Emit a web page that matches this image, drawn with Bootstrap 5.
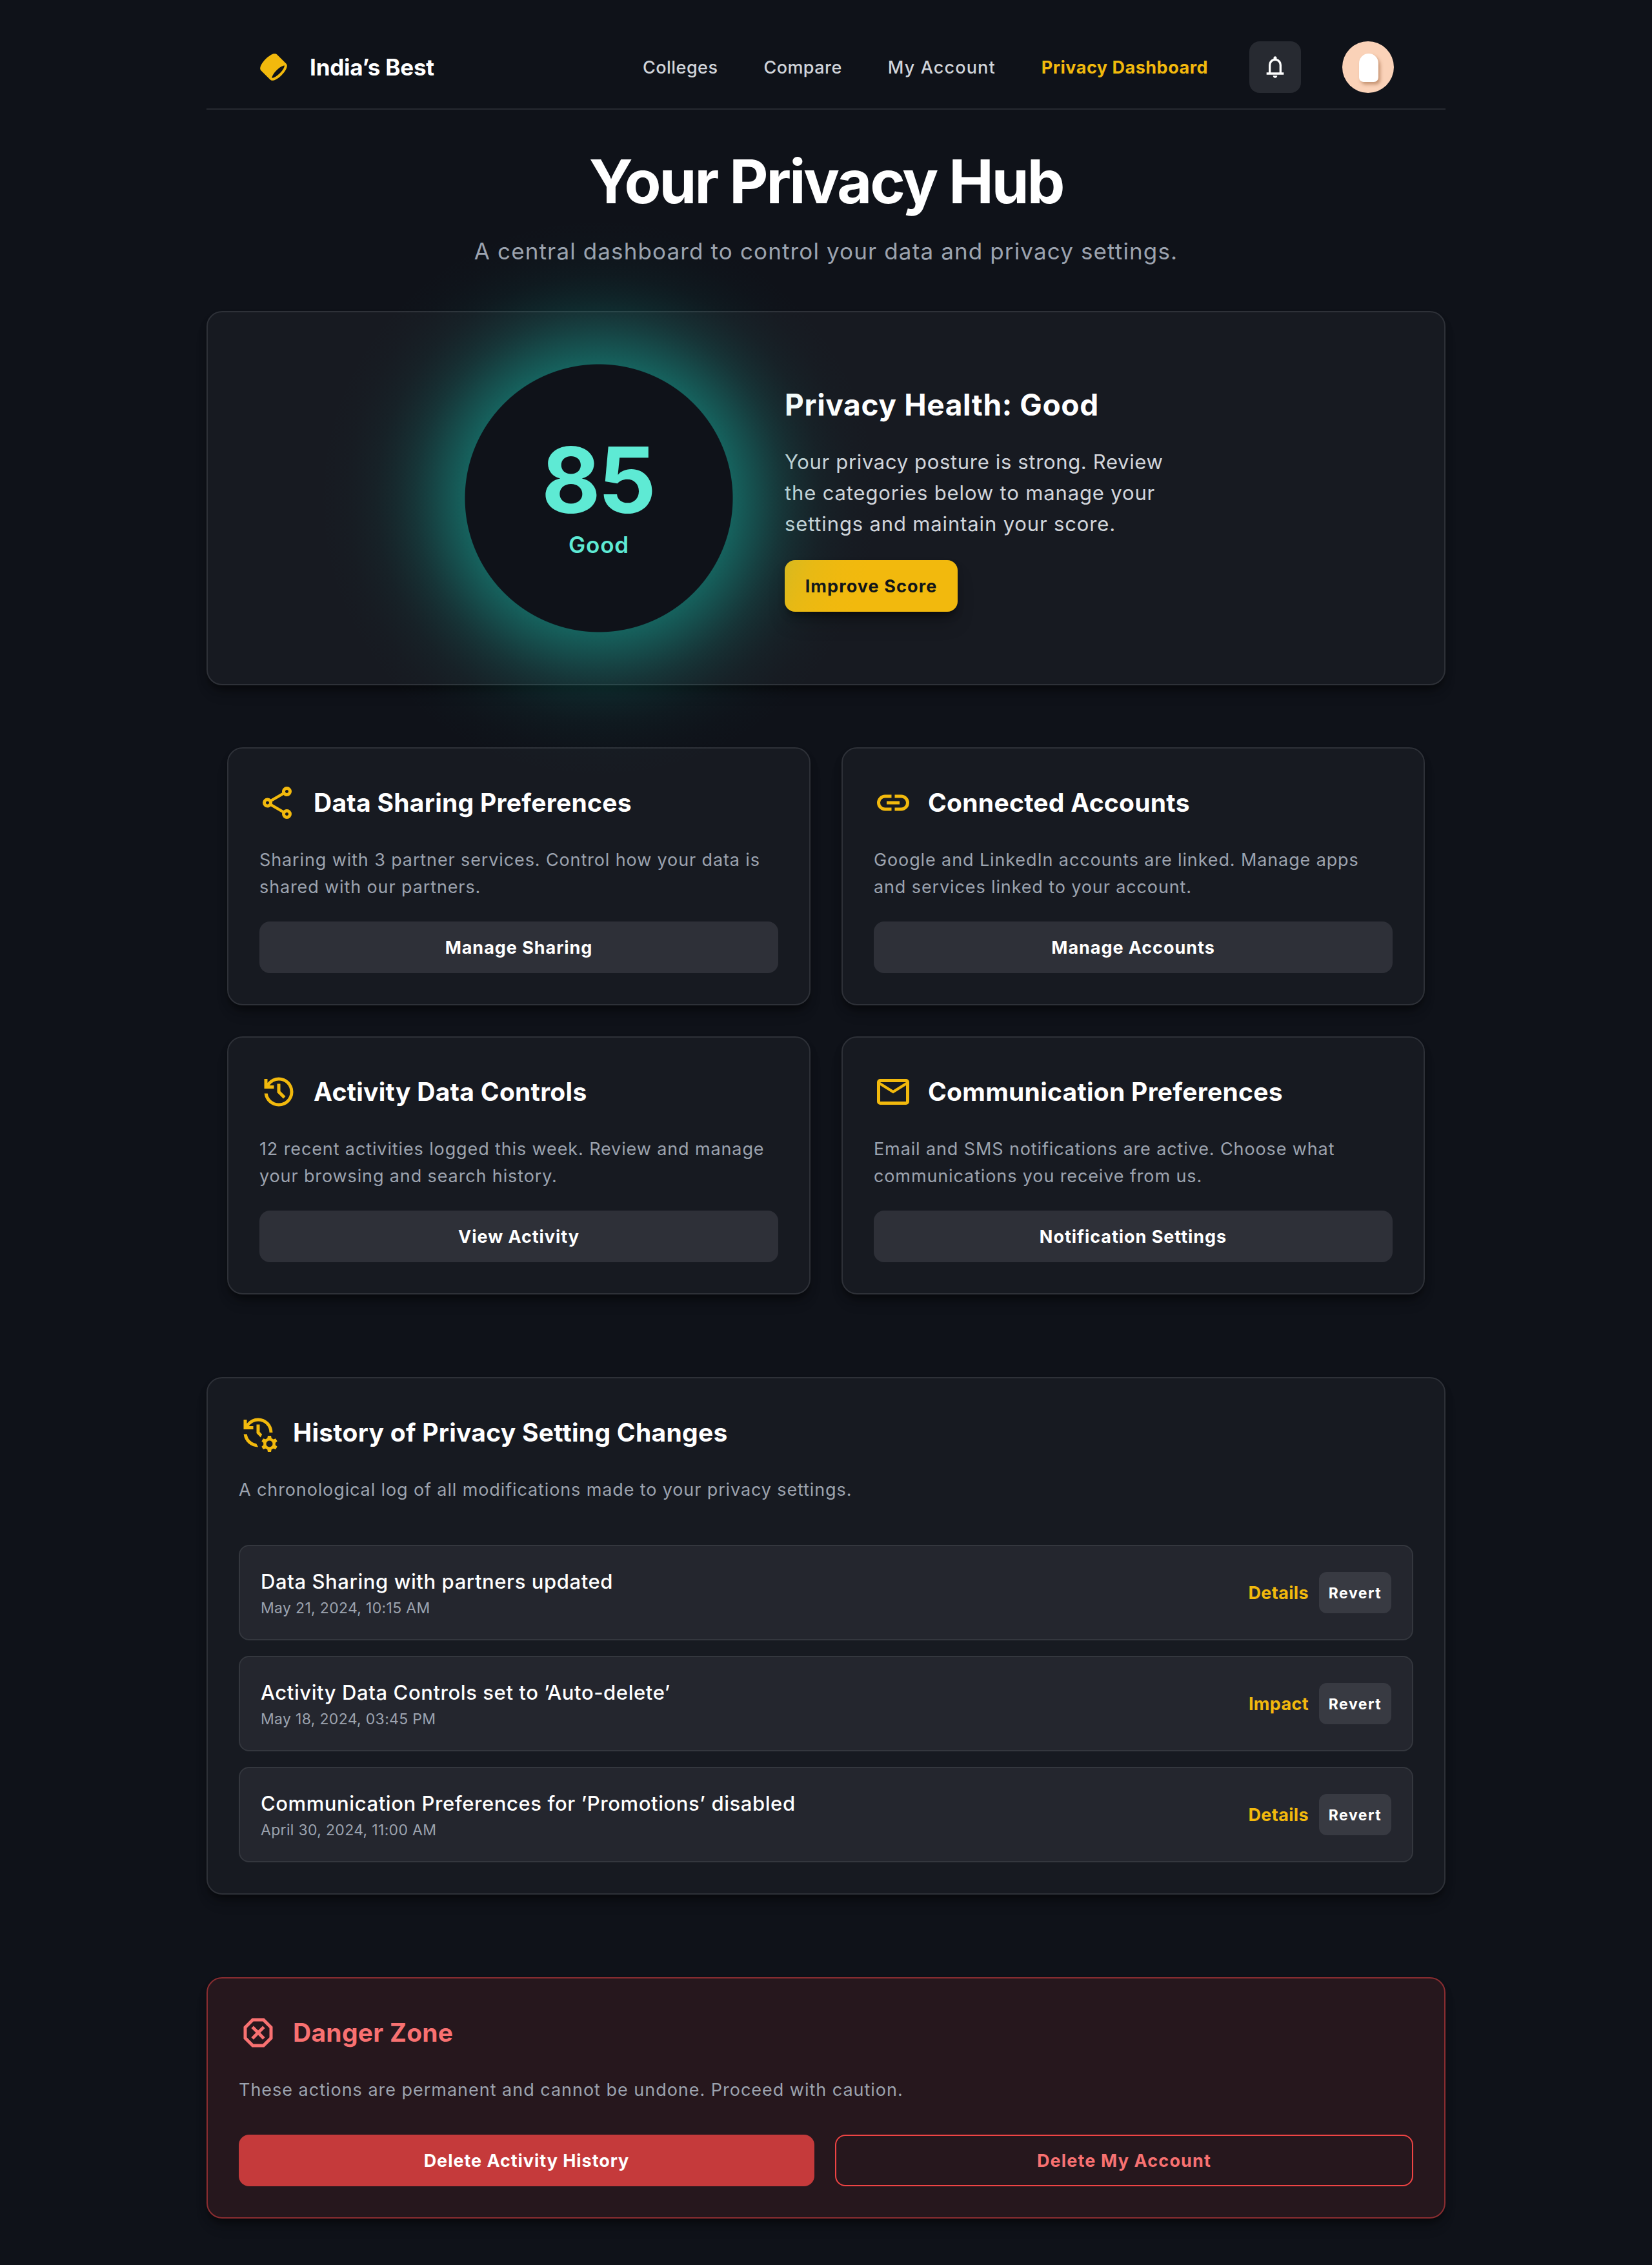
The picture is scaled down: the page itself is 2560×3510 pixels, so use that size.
<!DOCTYPE html>
<html lang="en" data-bs-theme="dark">
<head>
<meta charset="utf-8">
<meta name="viewport" content="width=device-width, initial-scale=1">
<title>Your Privacy Hub - India’s Best</title>
<link href="https://cdn.jsdelivr.net/npm/bootstrap@5.3.0/dist/css/bootstrap.min.css" rel="stylesheet">
<style>
:root{
  --hub-bg:#0f1219;
  --hub-surface:#171a21;
  --hub-yellow:#f2b90d;
  --hub-mint:#5eead4;
  --hub-red:#f87171;
  --hub-grey:#9ca3af;
}
body{
  font-family:Inter,"Liberation Sans",sans-serif;
  background:var(--hub-bg);
  color:#fff;
  font-size:27px;
  line-height:42px;
  letter-spacing:.88px;
}
h1,h2,p{margin:0;color:inherit}
svg{fill:currentColor;display:block;flex:none}
.page{width:1920px;padding:40px 0 72px}
.text-grey{color:var(--hub-grey)}
.text-yellow{color:var(--hub-yellow)}
.text-mint{color:var(--hub-mint)}
.text-red{color:var(--hub-red)}

.site-header{padding:24px 80px;border-bottom:2px solid #272a31}
.brand{gap:32px}
.brand-name{font-size:35px;line-height:45px;letter-spacing:-.2px;font-weight:700}
.header-tools{gap:64px}
.main-nav{gap:71px;padding-top:1px}
.main-nav a{color:#d1d5db;text-decoration:none;font-weight:500;letter-spacing:.45px}
.main-nav a.nav-wide{letter-spacing:1.15px}
.main-nav a.is-current{color:var(--hub-yellow);font-weight:700;letter-spacing:.5px}
.bell{width:80px;height:80px;border-radius:16px;background:#272a31;border:0;color:#fff;padding:0}
.avatar{width:80px;height:80px;background:#fad2b8}
.avatar-figure{width:30px;height:44px;border-radius:15px 15px 7px 7px;background:#fff;box-shadow:3px 4px 5px rgba(150,90,50,.5);margin:2px 0 0 2px}

.hero{padding:51px 0 66px}
.hero h1{font-size:93px;line-height:120px;font-weight:700;letter-spacing:-3px}
.hero p{font-size:35px;line-height:54px;margin-top:21px;letter-spacing:1.13px}

.panel{background:var(--hub-surface);border:2px solid #2e3138;border-radius:24px;
  box-shadow:0 8px 12px -2px rgba(0,0,0,.42),0 16px 24px -8px rgba(0,0,0,.2)}
.score-panel{padding:80px 0;gap:80px}
.score-ring{width:416px;height:416px;background:var(--hub-bg);z-index:1}
/* teal halo around the ring, painted over the neighbouring content */
.score-ring::before{content:"";position:absolute;inset:-232px;z-index:-1;border-radius:50%;pointer-events:none;
  background:radial-gradient(circle closest-side,transparent 207px,rgba(20,184,166,.45) 208px,rgba(20,184,166,.385) 226px,rgba(20,184,166,.31) 246px,rgba(20,184,166,.235) 266px,rgba(20,184,166,.17) 286px,rgba(20,184,166,.118) 306px,rgba(20,184,166,.078) 326px,rgba(20,184,166,.048) 346px,rgba(20,184,166,.026) 368px,rgba(20,184,166,.012) 392px,rgba(20,184,166,.004) 416px,transparent 440px)}
.score-number{font-size:141px;line-height:144px;font-weight:700;letter-spacing:-4px;margin-left:-4px}
.score-label{font-size:35px;line-height:56px;font-weight:600}
.score-copy{width:624px;gap:32px}
.score-copy h2{font-size:46px;line-height:62px;padding-bottom:2px;font-weight:700;letter-spacing:.65px}
.score-copy p{font-size:31px;line-height:48px;color:#d1d5db;letter-spacing:.85px}
.score-copy .line-tight{letter-spacing:.66px}

.hub-btn{display:flex;align-items:center;justify-content:center;height:80px;padding:1px 0 0;white-space:nowrap;
  border:0;border-radius:16px;font-size:27px;font-weight:700;line-height:40px;letter-spacing:.95px;color:#fff;background:#2e3038}
.hub-btn-primary{background:var(--hub-yellow);color:#111418;letter-spacing:1.1px;width:268px;
  box-shadow:0 8px 12px -4px rgba(0,0,0,.5),0 20px 30px -6px rgba(0,0,0,.25)}
.hub-btn-danger{background:#c53a3b}
.hub-btn-outline{background:transparent;border:2px solid #ef4444;color:var(--hub-red);letter-spacing:1.15px}
.hub-btn-small{height:64px;width:112px;font-size:23px;border-radius:12px;background:#383a42;letter-spacing:1.5px}

.settings{padding:0 32px;margin:96px 0 128px}
.settings .row{--bs-gutter-x:48px;--bs-gutter-y:48px}
.panel-body{padding:48px}
.panel-title{min-height:72px;gap:24px}
.panel-title h2{font-size:39px;line-height:50px;font-weight:700;letter-spacing:.27px}
.panel-body>p{margin:32px 0}

.log-list{margin-top:64px;gap:24px}
.log-item{background:#24262e;border:2px solid #34373e;border-radius:16px;padding:32px}
.log-title{font-size:31px;line-height:46px;padding-bottom:2px;font-weight:500;letter-spacing:.58px}
.log-time{font-size:23px;line-height:32px;letter-spacing:.32px}
.log-link{font-weight:700;letter-spacing:.35px;text-decoration:none;color:var(--hub-yellow);padding-top:1px}

.danger-panel{margin-top:128px;background:#26171d;border-color:#8b2d31}
.danger-panel .text-grey{letter-spacing:.98px}
.danger-actions{gap:32px;margin-top:48px}
.danger-actions .hub-btn{flex:1 1 0}
</style>
</head>
<body>
<div class="page mx-auto">

  <header class="site-header d-flex justify-content-between align-items-center">
    <div class="brand d-flex align-items-center">
      <svg class="text-yellow" width="48" height="48" viewBox="0 0 48 48"><path fill-rule="evenodd" clip-rule="evenodd" d="M39.475 21.6262C40.358 21.4363 40.6863 21.5589 40.7581 21.5934C40.7876 21.655 40.8547 21.857 40.8082 22.3336C40.7408 23.0255 40.4502 24.0046 39.8572 25.2301C38.6799 27.6631 36.5085 30.6631 33.5858 33.5858C30.6631 36.5085 27.6632 38.6799 25.2301 39.8572C24.0046 40.4502 23.0255 40.7407 22.3336 40.8082C21.8571 40.8547 21.6551 40.7875 21.5934 40.7581C21.5589 40.6863 21.4363 40.358 21.6262 39.475C21.8562 38.4054 22.4689 36.9657 23.5038 35.2817C24.7575 33.2417 26.5497 30.9744 28.7621 28.762C30.9744 26.5497 33.2417 24.7574 35.2817 23.5037C36.9657 22.4689 38.4054 21.8562 39.475 21.6262ZM4.41189 29.2403L18.7597 43.5881C19.8813 44.7097 21.4027 44.9179 22.7217 44.7893C24.0585 44.659 25.5148 44.1631 26.9723 43.4579C29.9052 42.0387 33.2618 39.5667 36.4142 36.4142C39.5667 33.2618 42.0387 29.9052 43.4579 26.9723C44.1631 25.5148 44.659 24.0585 44.7893 22.7217C44.9179 21.4027 44.7097 19.8813 43.5881 18.7597L29.2403 4.41187C27.8527 3.02428 25.8765 3.02573 24.2861 3.36776C22.6081 3.72863 20.7334 4.58419 18.8396 5.74801C16.4978 7.18716 13.9881 9.18353 11.5858 11.5858C9.18354 13.988 7.18717 16.4978 5.74802 18.8396C4.58421 20.7334 3.72865 22.6081 3.36778 24.2861C3.02574 25.8765 3.02429 27.8527 4.41189 29.2403Z"/></svg>
      <h2 class="brand-name">India’s Best</h2>
    </div>
    <div class="header-tools d-flex align-items-center">
      <nav class="main-nav d-flex align-items-center">
        <a href="#">Colleges</a>
        <a href="#">Compare</a>
        <a href="#" class="nav-wide">My Account</a>
        <a href="#" class="is-current">Privacy Dashboard</a>
      </nav>
      <button class="bell d-flex align-items-center justify-content-center" type="button" aria-label="Notifications">
        <svg width="40" height="40" viewBox="0 -960 960 960"><path d="M160-200v-80h80v-280q0-83 50-147.5T420-792v-28q0-25 17.5-42.5T480-880q25 0 42.5 17.5T540-820v28q80 20 130 84.5T720-560v280h80v80H160ZM480-80q-33 0-56.5-23.5T400-160h160q0 33-23.5 56.5T480-80ZM320-280h320v-280q0-66-47-113t-113-47q-66 0-113 47t-47 113v280Z"/></svg>
      </button>
      <div class="avatar rounded-circle d-flex align-items-center justify-content-center"><div class="avatar-figure"></div></div>
    </div>
  </header>

  <main>
    <section class="hero text-center">
      <h1>Your Privacy Hub</h1>
      <p class="text-grey">A central dashboard to control your data and privacy settings.</p>
    </section>

    <section class="panel score-panel d-flex justify-content-center align-items-center">
      <div class="score-ring rounded-circle position-relative d-flex flex-column align-items-center justify-content-center text-mint">
        <div class="score-number">85</div>
        <div class="score-label">Good</div>
      </div>
      <div class="score-copy d-flex flex-column align-items-start">
        <h2>Privacy Health: Good</h2>
        <p><span class="line-tight">Your privacy posture is strong. Review</span><br>the categories below to manage your<br>settings and maintain your score.</p>
        <button class="hub-btn hub-btn-primary" type="button">Improve Score</button>
      </div>
    </section>

    <section class="settings">
      <div class="row row-cols-2">
        <div class="col">
          <div class="panel panel-body">
            <div class="panel-title d-flex align-items-center">
              <svg class="text-yellow" width="60" height="60" viewBox="0 -960 960 960"><path d="M680-80q-50 0-85-35t-35-85q0-6 3-28L282-392q-16 15-37 23.5t-45 8.5q-50 0-85-35t-35-85q0-50 35-85t85-35q24 0 45 8.5t37 23.5l281-164q-2-7-2.5-13.5T560-760q0-50 35-85t85-35q50 0 85 35t35 85q0 50-35 85t-85 35q-24 0-45-8.5T598-672L317-508q2 7 2.5 13.5t.5 14.5q0 8-.5 14.5T317-452l281 164q16-15 37-23.5t45-8.5q50 0 85 35t35 85q0 50-35 85t-85 35Zm0-80q17 0 28.5-11.5T720-200q0-17-11.5-28.5T680-240q-17 0-28.5 11.5T640-200q0 17 11.5 28.5T680-160ZM200-440q17 0 28.5-11.5T240-480q0-17-11.5-28.5T200-520q-17 0-28.5 11.5T160-480q0 17 11.5 28.5T200-440Zm480-280q17 0 28.5-11.5T720-760q0-17-11.5-28.5T680-800q-17 0-28.5 11.5T640-760q0 17 11.5 28.5T680-720Z"/></svg>
              <h2>Data Sharing Preferences</h2>
            </div>
            <p class="text-grey">Sharing with 3 partner services. Control how your data is<br>shared with our partners.</p>
            <button class="hub-btn w-100" type="button">Manage Sharing</button>
          </div>
        </div>
        <div class="col">
          <div class="panel panel-body">
            <div class="panel-title d-flex align-items-center">
              <svg class="text-yellow" width="60" height="60" viewBox="0 -960 960 960"><path d="M440-280H280q-83 0-141.5-58.5T80-480q0-83 58.5-141.5T280-680h160v80H280q-50 0-85 35t-35 85q0 50 35 85t85 35h160v80ZM320-440v-80h320v80H320Zm200 160v-80h160q50 0 85-35t35-85q0-50-35-85t-85-35H520v-80h160q83 0 141.5 58.5T880-480q0 83-58.5 141.5T680-280H520Z"/></svg>
              <h2>Connected Accounts</h2>
            </div>
            <p class="text-grey">Google and LinkedIn accounts are linked. Manage apps<br>and services linked to your account.</p>
            <button class="hub-btn w-100" type="button">Manage Accounts</button>
          </div>
        </div>
        <div class="col">
          <div class="panel panel-body">
            <div class="panel-title d-flex align-items-center">
              <svg class="text-yellow" width="60" height="60" viewBox="0 -960 960 960"><path d="M480-120q-138 0-240.5-91.5T122-440h82q14 104 92.5 172T480-200q117 0 198.5-81.5T760-480q0-117-81.5-198.5T480-760q-69 0-129 32t-101 88h110v80H120v-240h80v94q51-64 124.5-99T480-840q75 0 140.5 28.5t114 77q48.5 48.5 77 114T840-480q0 75-28.5 140.5t-77 114q-48.5 48.5-114 77T480-120Zm112-192L440-464v-216h80v184l128 128-56 56Z"/></svg>
              <h2>Activity Data Controls</h2>
            </div>
            <p class="text-grey">12 recent activities logged this week. Review and manage<br>your browsing and search history.</p>
            <button class="hub-btn w-100" type="button">View Activity</button>
          </div>
        </div>
        <div class="col">
          <div class="panel panel-body">
            <div class="panel-title d-flex align-items-center">
              <svg class="text-yellow" width="60" height="60" viewBox="0 -960 960 960"><path d="M160-160q-33 0-56.5-23.5T80-240v-480q0-33 23.5-56.5T160-800h640q33 0 56.5 23.5T880-720v480q0 33-23.5 56.5T800-160H160Zm320-280L160-640v400h640v-400L480-440Zm0-80 320-200H160l320 200Z"/></svg>
              <h2>Communication Preferences</h2>
            </div>
            <p class="text-grey">Email and SMS notifications are active. Choose what<br>communications you receive from us.</p>
            <button class="hub-btn w-100" type="button">Notification Settings</button>
          </div>
        </div>
      </div>
    </section>

    <section class="panel panel-body">
      <div class="panel-title d-flex align-items-center">
        <svg class="text-yellow" width="60" height="60" viewBox="0 -960 960 960"><path d="M480-120q-138 0-240.5-91.5T122-440h82q12 93 76.500 157.500T435-204l48 84Zm351-360h-71q0-117-81.500-198.500T480-760q-69 0-129 32t-101 88h110v80H120v-240h80v94q51-64 124.500-99T480-840q75 0 140.500 28.500t114 77q48.500 48.500 77 114T840-480ZM520-496l58 58-36 78L440-464v-216h80v184Z"/><path transform="translate(80 120)" d="m640-120-12-60q-12-5-22.500-10.500T584-204l-58 18-40-68 46-40q-2-14-2-26t2-26l-46-40 40-68 58 18q11-8 21.500-13.500T628-460l12-60h80l12 60q12 5 22.500 11t21.500 15l58-20 40 70-46 40q2 12 2 25t-2 25l46 40-40 68-58-18q-11 8-21.500 13.500T732-180l-12 60h-80Zm40-120q33 0 56.500-23.500T760-320q0-33-23.500-56.500T680-400q-33 0-56.500 23.500T600-320q0 33 23.500 56.500T680-240Z"/></svg>
        <h2>History of Privacy Setting Changes</h2>
      </div>
      <p class="text-grey mb-0">A chronological log of all modifications made to your privacy settings.</p>
      <div class="log-list d-flex flex-column">
        <div class="log-item d-flex justify-content-between align-items-center">
          <div>
            <div class="log-title">Data Sharing with partners updated</div>
            <div class="log-time text-grey">May 21, 2024, 10:15 AM</div>
          </div>
          <div class="d-flex align-items-center gap-3">
            <a class="log-link" href="#">Details</a>
            <button class="hub-btn hub-btn-small" type="button">Revert</button>
          </div>
        </div>
        <div class="log-item d-flex justify-content-between align-items-center">
          <div>
            <div class="log-title">Activity Data Controls set to ’Auto-delete’</div>
            <div class="log-time text-grey">May 18, 2024, 03:45 PM</div>
          </div>
          <div class="d-flex align-items-center gap-3">
            <a class="log-link" href="#">Impact</a>
            <button class="hub-btn hub-btn-small" type="button">Revert</button>
          </div>
        </div>
        <div class="log-item d-flex justify-content-between align-items-center">
          <div>
            <div class="log-title">Communication Preferences for ’Promotions’ disabled</div>
            <div class="log-time text-grey">April 30, 2024, 11:00 AM</div>
          </div>
          <div class="d-flex align-items-center gap-3">
            <a class="log-link" href="#">Details</a>
            <button class="hub-btn hub-btn-small" type="button">Revert</button>
          </div>
        </div>
      </div>
    </section>

    <section class="panel panel-body danger-panel">
      <div class="panel-title d-flex align-items-center text-red">
        <svg width="60" height="60" viewBox="0 -960 960 960"><path d="M330-120 120-330v-300l210-210h300l210 210v300L630-120H330Zm36-190 114-114 114 114 56-56-114-114 114-114-56-56-114 114-114-114-56 56 114 114-114 114 56 56Zm-2 110h232l164-164v-232L596-760H364L200-596v232l164 164Z"/></svg>
        <h2>Danger Zone</h2>
      </div>
      <p class="text-grey mb-0">These actions are permanent and cannot be undone. Proceed with caution.</p>
      <div class="danger-actions d-flex">
        <button class="hub-btn hub-btn-danger" type="button">Delete Activity History</button>
        <button class="hub-btn hub-btn-outline" type="button">Delete My Account</button>
      </div>
    </section>
  </main>
</div>
<script src="https://cdn.jsdelivr.net/npm/bootstrap@5.3.0/dist/js/bootstrap.bundle.min.js"></script>
</body>
</html>
